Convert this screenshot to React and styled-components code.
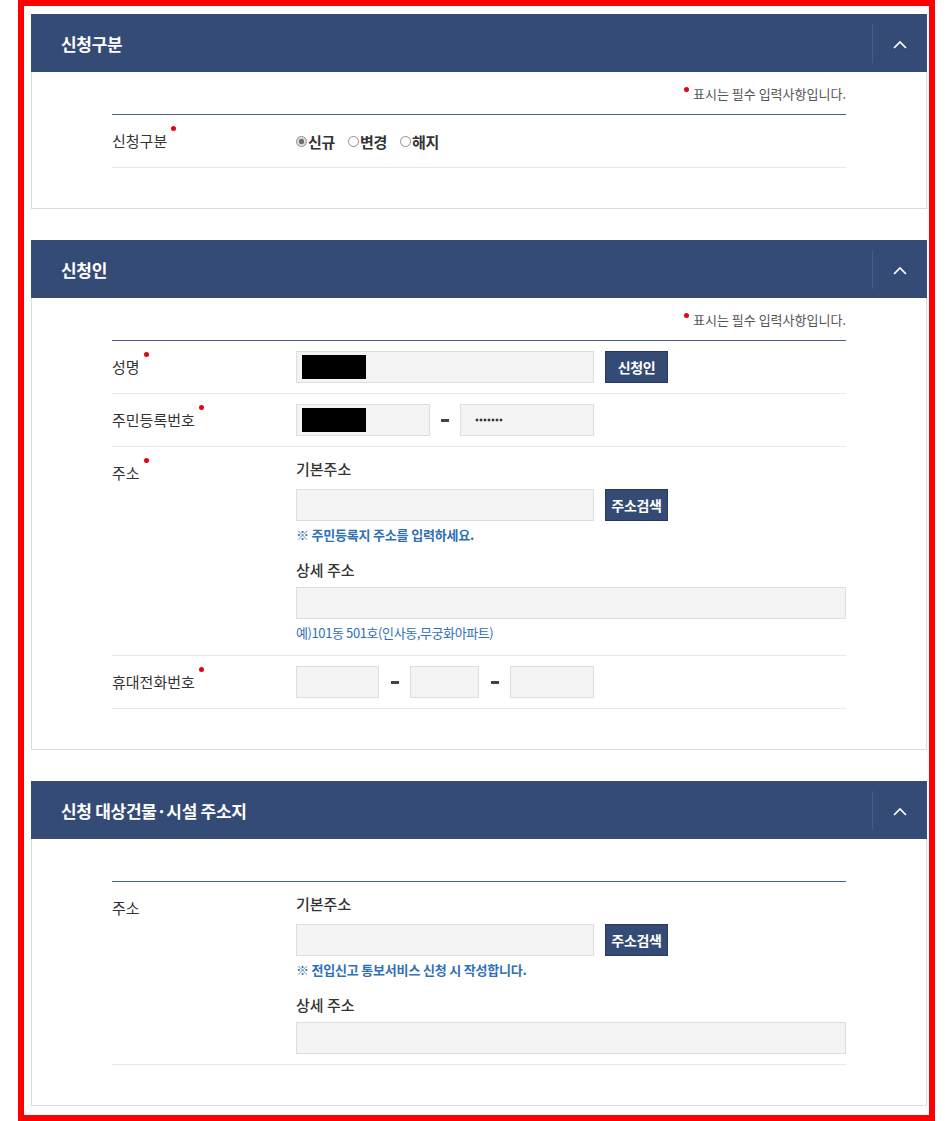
import React from 'react';
import styled, { createGlobalStyle } from 'styled-components';

const GlobalStyle = createGlobalStyle`
  html, body {
    margin: 0;
    padding: 0;
    background: #fff;
  }
  body {
    font-family: "Noto Sans CJK KR", "Noto Sans", sans-serif;
    color: #333;
  }
  * {
    box-sizing: border-box;
  }
`;

const Frame = styled.div`
  width: 917px;
  margin-left: 18px;
  border: 6px solid #ff0000;
  border-bottom-width: 7px;
  padding: 8px 2px 9px 7px;
  display: flex;
  flex-direction: column;
  gap: 31px;
`;

const Panel = styled.section`
  background: #fff;
`;

const Header = styled.div`
  height: 58px;
  background: #344b76;
  display: flex;
  align-items: center;
  padding-left: 30px;
`;

const Title = styled.h2`
  flex: 1;
  margin: 0;
  font-size: 17px;
  font-weight: 700;
  color: #fff;
  letter-spacing: -0.3px;
`;

const Toggle = styled.button`
  width: 55px;
  height: 39px;
  margin-top: 1px;
  padding: 0;
  border: 0;
  border-left: 1px solid rgba(255, 255, 255, 0.1);
  background: transparent;
  display: flex;
  align-items: center;
  justify-content: center;
  cursor: pointer;
`;

const Body = styled.div`
  border: 1px solid #dcdcdc;
  border-top: 0;
  padding: 0 80px 40px;
`;

const Notice = styled.p`
  margin: 0;
  height: 42px;
  padding-top: 12px;
  text-align: right;
  font-size: 13px;
  line-height: 20px;
  color: #555;
`;

const NoticeDot = styled.span`
  display: inline-block;
  width: 5px;
  height: 5px;
  border-radius: 50%;
  background: #e60012;
  vertical-align: top;
  margin: 3px 4px 0 0;
`;

const Table = styled.div`
  border-top: 1px solid #4a5f8c;
`;

const Row = styled.div`
  display: flex;
  padding: 10px 0;
  border-bottom: 1px solid #e9e9e9;
`;

const Label = styled.div`
  width: 184px;
  flex-shrink: 0;
  font-size: 15px;
  line-height: 32px;
  color: #333;
`;

const Req = styled.span`
  display: inline-block;
  width: 5px;
  height: 5px;
  border-radius: 50%;
  background: #e60012;
  vertical-align: top;
  margin: 1px 0 0 4px;
`;

const Cell = styled.div`
  flex: 1;
  display: flex;
  flex-direction: column;
`;

const Line = styled.div`
  display: flex;
  align-items: center;
  height: 32px;
`;

const Field = styled.div`
  width: ${p => (p.$w ? `${p.$w}px` : '100%')};
  height: 32px;
  flex-shrink: 0;
  background: #f4f4f4;
  border: 1px solid #dedede;
  display: flex;
  align-items: center;
  padding-left: 5px;
`;

const Redact = styled.span`
  width: 64px;
  height: 24px;
  background: #000;
`;

/* password mask: seven small dots */
const Mask = styled.span`
  margin-left: 9px;
  width: 28px;
  height: 4px;
  background: radial-gradient(circle, #3a3a3a 1.3px, transparent 1.7px) 0 0 / 4px 4px repeat-x;
`;

const Dash = styled.span`
  width: ${p => p.$w || 30}px;
  display: flex;
  justify-content: center;

  &::before {
    content: '';
    width: 8px;
    height: 3px;
    background: #444;
  }
`;

const Btn = styled.button`
  width: 63px;
  height: 32px;
  margin-left: 11px;
  padding: 0;
  background: #344b76;
  border: 1px solid #263a5e;
  color: #fff;
  font-family: inherit;
  font-size: 14px;
  font-weight: 700;
  letter-spacing: -0.3px;
  cursor: pointer;
`;

const SubLabel = styled.div`
  font-size: 15px;
  line-height: 24px;
  font-weight: 500;
  color: #333;
  margin: ${p => (p.$first ? '0' : '13px')} 0 ${p => (p.$first ? '8px' : '5px')};
`;

const Note = styled.div`
  margin-top: 4px;
  font-size: 13px;
  line-height: 20px;
  font-weight: ${p => (p.$plain ? 400 : 700)};
  color: #2f70b8;
  letter-spacing: ${p => (p.$plain ? '-0.4px' : '-0.2px')};
  margin-bottom: ${p => (p.$plain ? '2px' : '0')};
`;

const Radios = styled.div`
  display: flex;
  align-items: center;
  gap: 13px;
  height: 32px;
`;

const RadioItem = styled.label`
  display: flex;
  align-items: center;
  font-size: 15px;
  font-weight: 700;
  color: #333;
  letter-spacing: -0.3px;
`;

const Circle = styled.span`
  width: 11px;
  height: 11px;
  margin-right: 1px;
  border-radius: 50%;
  border: 1px solid #8e8e8e;
  background: ${p =>
    p.$on ? 'radial-gradient(circle, #6f6f6f 0 2.5px, #dcdcdc 3px)' : '#fff'};
`;

function Chevron() {
  return (
    <svg width="16" height="10" viewBox="0 0 16 10">
      <polyline points="2,9 8,3 14,9" fill="none" stroke="#fff" strokeWidth="1.7" />
    </svg>
  );
}

function Section({ title, notice = true, children }) {
  return (
    <Panel>
      <Header>
        <Title>{title}</Title>
        <Toggle aria-label="접기">
          <Chevron />
        </Toggle>
      </Header>
      <Body>
        <Notice>
          {notice && (
            <>
              <NoticeDot />
              표시는 필수 입력사항입니다.
            </>
          )}
        </Notice>
        <Table>{children}</Table>
      </Body>
    </Panel>
  );
}

function FieldLabel({ children, required }) {
  return (
    <Label>
      {children}
      {required && <Req />}
    </Label>
  );
}

export default function App() {
  return (
    <>
      <GlobalStyle />
      <Frame>
        <Section title="신청구분">
          <Row>
            <FieldLabel required>신청구분</FieldLabel>
            <Radios>
              <RadioItem>
                <Circle $on />
                신규
              </RadioItem>
              <RadioItem>
                <Circle />
                변경
              </RadioItem>
              <RadioItem>
                <Circle />
                해지
              </RadioItem>
            </Radios>
          </Row>
        </Section>

        <Section title="신청인">
          <Row>
            <FieldLabel required>성명</FieldLabel>
            <Line>
              <Field $w={298}>
                <Redact />
              </Field>
              <Btn>신청인</Btn>
            </Line>
          </Row>
          <Row>
            <FieldLabel required>주민등록번호</FieldLabel>
            <Line>
              <Field $w={134}>
                <Redact />
              </Field>
              <Dash />
              <Field $w={134}>
                <Mask />
              </Field>
            </Line>
          </Row>
          <Row>
            <FieldLabel required>주소</FieldLabel>
            <Cell>
              <SubLabel $first>기본주소</SubLabel>
              <Line>
                <Field $w={298} />
                <Btn>주소검색</Btn>
              </Line>
              <Note>※ 주민등록지 주소를 입력하세요.</Note>
              <SubLabel>상세 주소</SubLabel>
              <Field />
              <Note $plain>예)101동 501호(인사동,무궁화아파트)</Note>
            </Cell>
          </Row>
          <Row>
            <FieldLabel required>휴대전화번호</FieldLabel>
            <Line>
              <Field $w={83} />
              <Dash $w={31} />
              <Field $w={69} />
              <Dash $w={31} />
              <Field $w={84} />
            </Line>
          </Row>
        </Section>

        <Section title="신청 대상건물·시설 주소지" notice={false}>
          <Row>
            <FieldLabel>주소</FieldLabel>
            <Cell>
              <SubLabel $first>기본주소</SubLabel>
              <Line>
                <Field $w={298} />
                <Btn>주소검색</Btn>
              </Line>
              <Note>※ 전입신고 통보서비스 신청 시 작성합니다.</Note>
              <SubLabel>상세 주소</SubLabel>
              <Field />
            </Cell>
          </Row>
        </Section>
      </Frame>
    </>
  );
}
